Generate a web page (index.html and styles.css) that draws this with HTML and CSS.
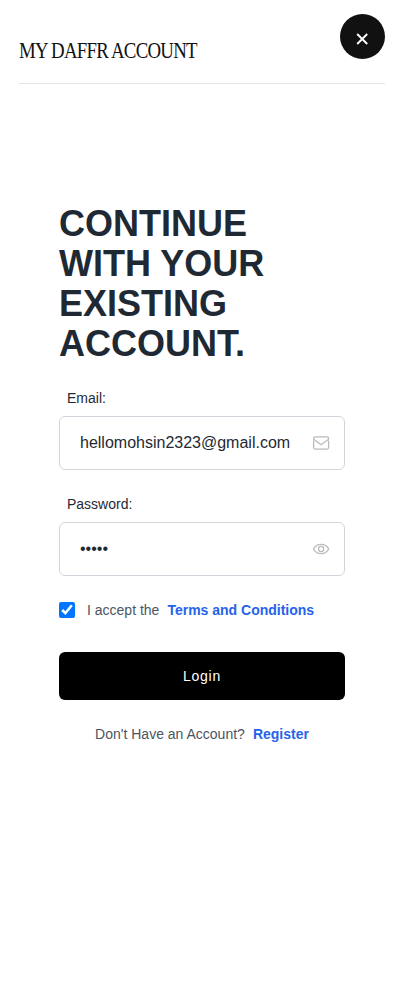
FILE: index.html
```html
<!DOCTYPE html>
<html lang="en">
<head>
<meta charset="utf-8">
<meta name="viewport" content="width=device-width, initial-scale=1">
<title>My Daffr Account</title>
<link rel="stylesheet" href="styles.css">
</head>
<body>
<header class="header">
  <h1 class="brand">MY DAFFR ACCOUNT</h1>
  <button class="close" type="button" aria-label="Close">
    <svg width="13" height="12" viewBox="0 0 13 12" fill="none" stroke="currentColor" stroke-width="1.9"><path d="M1.2 1l10 10M11.2 1l-10 10"/></svg>
  </button>
</header>
<main class="panel">
  <h2 class="title">CONTINUE WITH YOUR EXISTING ACCOUNT.</h2>
  <form>
    <div class="field">
      <label class="label" for="email">Email:</label>
      <div class="control">
        <input class="input" id="email" type="email" value="hellomohsin2323@gmail.com">
        <svg class="icon" viewBox="0 0 18 18"><path d="M1.6 6.6v7q0 1.5 1.5 1.5h12q1.5 0 1.5-1.5v-7M1.6 5.2V4.4q0-1.5 1.5-1.5h12q1.5 0 1.5 1.5v.8l-7.5 5.6z"/></svg>
      </div>
    </div>
    <div class="field">
      <label class="label" for="password">Password:</label>
      <div class="control">
        <input class="input" id="password" type="password" value="12345">
        <svg class="icon" viewBox="0 0 18 18"><path d="M1.5 9C3 6 5.8 4.4 9.1 4.4S15.2 6 16.7 9c-1.5 3-4.3 4.6-7.6 4.6S3 12 1.5 9z"/><circle cx="9.1" cy="9" r="2.6"/></svg>
      </div>
    </div>
    <div class="accept">
      <input class="check" id="terms" type="checkbox" checked>
      <label for="terms">I accept the</label>
      <a class="link" href="#">Terms and Conditions</a>
    </div>
    <button class="submit" type="submit">Login</button>
  </form>
  <p class="register"><span>Don't Have an Account?</span><a class="link" href="#">Register</a></p>
</main>
</body>
</html>
```
FILE: styles.css
```css
* {
  box-sizing: border-box;
}

body {
  margin: 0;
  background: #fff;
  color: #1f2937;
  font-family: "Liberation Sans", Arial, sans-serif;
  font-size: 14px;
  line-height: 20px;
}

.header {
  display: flex;
  justify-content: space-between;
  align-items: flex-start;
  height: 84px;
  margin: 0 18px 0 19px;
  padding-top: 14px;
  border-bottom: 1px solid #e5e5e5;
}

.brand {
  margin: 24px 0 0;
  color: #111;
  font: 400 23px/26px "Liberation Serif", serif;
  letter-spacing: -0.9px;
  white-space: nowrap;
  transform: scaleX(0.818);
  transform-origin: left;
}

.close {
  display: flex;
  flex: none;
  justify-content: center;
  width: 45px;
  height: 45px;
  padding: 19px 0 0;
  border: 0;
  border-radius: 50%;
  background: #111;
  color: #fff;
}

.panel {
  width: 286px;
  margin: 120px 0 0 59px;
}

.title {
  margin: 0 0 24px;
  color: #1f2933;
  font-size: 36px;
  line-height: 40px;
}

.field {
  margin-bottom: 24px;
}

.label {
  display: block;
  margin: 0 0 8px 8px;
}

.control {
  display: flex;
  align-items: center;
  height: 54px;
  padding: 0 14px 0 20px;
  border: 1px solid #d1d5db;
  border-radius: 6px;
}

.input {
  flex: 1;
  min-width: 0;
  padding: 0;
  border: 0;
  outline: 0;
  background: none;
  color: #1f2933;
  font: 16px/24px "Liberation Sans", Arial, sans-serif;
}

.icon {
  flex: none;
  width: 18px;
  height: 18px;
  fill: none;
  stroke: #bbb;
  stroke-width: 1.3;
}

.accept {
  display: flex;
  align-items: center;
  gap: 8px;
  color: #4b5563;
}

.check {
  width: 16px;
  height: 16px;
  margin: 0 4px 0 0;
}

.link {
  color: #2563eb;
  font-weight: 700;
  text-decoration: none;
}

.submit {
  width: 100%;
  height: 48px;
  margin: 32px 0 24px;
  border: 0;
  border-radius: 6px;
  background: #000;
  color: #fff;
  font: 14px/20px "Liberation Sans", Arial, sans-serif;
  letter-spacing: 0.7px;
}

.register {
  display: flex;
  justify-content: center;
  gap: 8px;
  margin: 0;
  color: #4b5563;
}
```
